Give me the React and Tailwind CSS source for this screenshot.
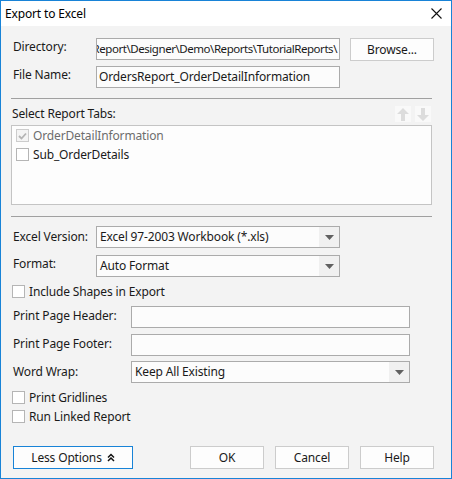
import React from 'react';

const FONT = { fontFamily: '"Noto Sans", "Open Sans", sans-serif' };

const Arrow = ({ down }) => (
  <div className="w-[16px] h-[16px] bg-[#f9f9f9] flex items-center justify-center">
    <svg width="12" height="13" viewBox="0 0 12 13" className={down ? 'rotate-180' : ''}>
      <path d="M6 0 L12 6 L8 6 L8 13 L4 13 L4 6 L0 6 Z" fill="#dcdcdc" />
    </svg>
  </div>
);

const Caret = () => (
  <div className="w-[20px] h-full bg-[#f0f0f0] flex items-center justify-center">
    <svg width="9" height="5" viewBox="0 0 9 5">
      <path d="M0 0 L9 0 L4.5 5 Z" fill="#606060" />
    </svg>
  </div>
);

const Select = ({ value, w }) => (
  <div className={`${w} h-[22px] border border-[#ababab] bg-[#fcfcfc] flex items-stretch`}>
    <div className="flex-1 px-[3px] flex items-center text-[#1a1a1a]">{value}</div>
    <Caret />
  </div>
);

const TextBox = ({ children, w, end }) => (
  <div className={`${w} h-[22px] border border-[#ababab] bg-[#fcfcfc] flex items-center overflow-hidden px-[2px] ${end ? 'justify-end' : ''}`}>
    <span className={`whitespace-nowrap shrink-0 text-[#1a1a1a] ${end ? 'text-[11.5px] tracking-[-0.45px]' : ''}`}>{children}</span>
  </div>
);

const Check = ({ label, checked, disabled }) => (
  <div className="flex items-center gap-[4px] h-[13px]">
    <div className={`w-[13px] h-[13px] border flex items-center justify-center ${disabled ? 'border-[#cccccc] bg-[#f4f4f4]' : 'border-[#b5b5b5] bg-white'}`}>
      {checked && (
        <svg width="9" height="8" viewBox="0 0 9 8">
          <path d="M1 4 L3.5 6.5 L8 1.5" stroke="#b4b4b4" strokeWidth="1.8" fill="none" />
        </svg>
      )}
    </div>
    <span className={`leading-[16px] ${disabled ? 'text-[#6d6d6d]' : 'text-[#1a1a1a]'}`}>{label}</span>
  </div>
);

const Button = ({ children, w, primary }) => (
  <div className={`${w} h-[23px] border ${primary ? 'border-[#1883d7]' : 'border-[#cccccc]'} bg-[#fdfdfd] flex items-center justify-center gap-[5px] text-[#1a1a1a]`}>
    {children}
  </div>
);

export default function App() {
  return (
    <div className="w-[452px] h-[479px] border border-[#1883d7] bg-[#f3f3f3] flex flex-col text-[12px] leading-[16px] tracking-[-0.15px] overflow-hidden" style={FONT}>
      {/* Title bar */}
      <div className="h-[25px] bg-white flex items-center justify-between pl-[4px] pr-[9px] shrink-0">
        <span className="text-[12px] text-black">Export to Excel</span>
        <svg width="11" height="11" viewBox="0 0 11 11">
          <path d="M0.5 0.5 L10.5 10.5 M10.5 0.5 L0.5 10.5" stroke="#111" strokeWidth="1.1" />
        </svg>
      </div>

      {/* Body */}
      <div className="flex flex-col pl-[10px] text-[#1a1a1a]">
        <div className="mt-[12px] flex items-start">
          <span className="w-[85px] pl-[2px] pt-[1px]">Directory:</span>
          <TextBox w="w-[244px]" end>JReport\Designer\Demo\Reports\TutorialReports\</TextBox>
          <div className="ml-[10px]">
            <Button w="w-[84px]">Browse...</Button>
          </div>
        </div>
        <div className="mt-[5px] flex items-start">
          <span className="w-[85px] pl-[2px] pt-[1px]">File Name:</span>
          <TextBox w="w-[244px]">OrdersReport_OrderDetailInformation</TextBox>
        </div>

        <div className="mt-[10px] w-[421px] h-px bg-[#a0a0a0]" />

        <div className="mt-[7px] w-[421px] flex items-center justify-between">
          <span className="pl-[1px]">Select Report Tabs:</span>
          <div className="flex gap-[4px] mr-[1px]">
            <Arrow />
            <Arrow down />
          </div>
        </div>
        <div className="mt-[3px] w-[421px] h-[80px] border border-[#c4c4c4] bg-[#fdfdfd] flex flex-col gap-[6px] pl-[4px] pt-[3px]">
          <Check label="OrderDetailInformation" checked disabled />
          <Check label="Sub_OrderDetails" />
        </div>

        <div className="mt-[11px] w-[421px] h-px bg-[#a0a0a0]" />

        <div className="mt-[9px] flex items-start">
          <span className="w-[85px] pl-[2px] pt-[3px]">Excel Version:</span>
          <Select w="w-[244px]" value="Excel 97-2003 Workbook (*.xls)" />
        </div>
        <div className="mt-[7px] flex items-start">
          <span className="w-[85px] pl-[2px] pt-[1px]">Format:</span>
          <Select w="w-[244px]" value="Auto Format" />
        </div>

        <div className="mt-[8px] pl-[1px]">
          <Check label="Include Shapes in Export" />
        </div>

        <div className="mt-[8px] flex items-start">
          <span className="w-[120px] pl-[2px] pt-[2px]">Print Page Header:</span>
          <TextBox w="w-[279px]"></TextBox>
        </div>
        <div className="mt-[6px] flex items-start">
          <span className="w-[120px] pl-[2px] pt-[2px]">Print Page Footer:</span>
          <TextBox w="w-[279px]"></TextBox>
        </div>
        <div className="mt-[5px] flex items-start">
          <span className="w-[120px] pl-[2px] pt-[3px]">Word Wrap:</span>
          <Select w="w-[279px]" value="Keep All Existing" />
        </div>

        <div className="mt-[8px] pl-[1px]">
          <Check label="Print Gridlines" />
        </div>
        <div className="mt-[6px] pl-[1px]">
          <Check label="Run Linked Report" />
        </div>

        <div className="mt-[23px] flex items-center pl-[2px]">
          <Button w="w-[120px]" primary>
            <span>Less Options</span>
            <svg width="8" height="9" viewBox="0 0 8 9">
              <path d="M1 4.5 L4 1.5 L7 4.5 M1 8 L4 5 L7 8" stroke="#111" strokeWidth="1.5" fill="none" />
            </svg>
          </Button>
          <div className="ml-[57px] flex gap-[11px]">
            <Button w="w-[74px]">OK</Button>
            <Button w="w-[74px]">Cancel</Button>
            <Button w="w-[74px]">Help</Button>
          </div>
        </div>
      </div>
    </div>
  );
}
